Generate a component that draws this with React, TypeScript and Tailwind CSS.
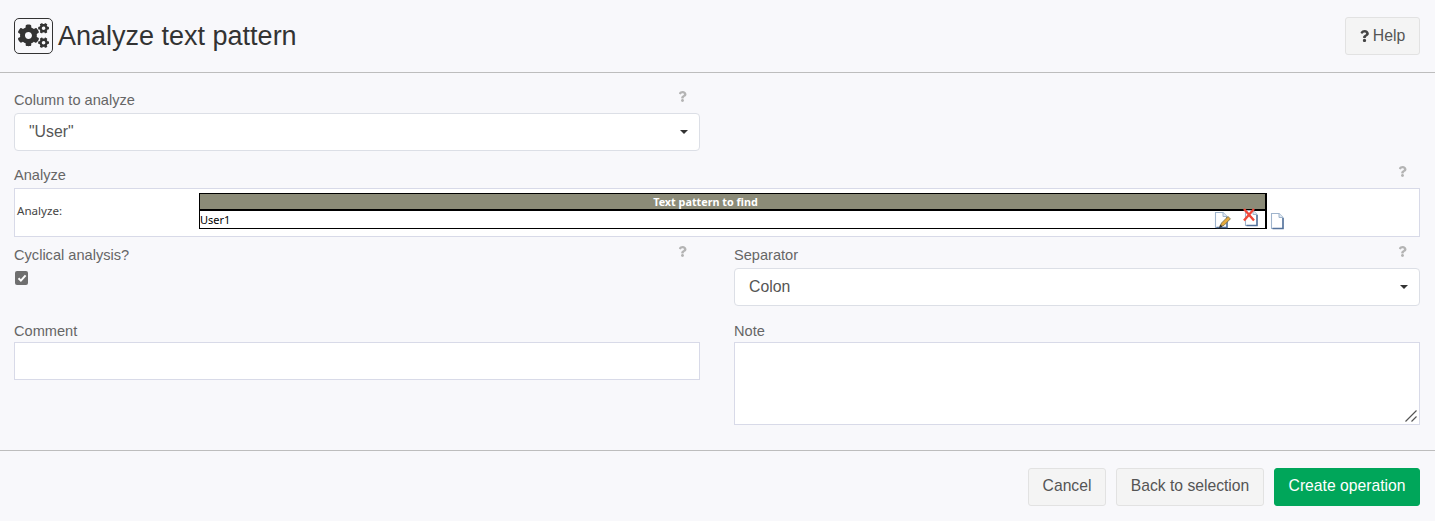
import React from "react";
import { FaCogs, FaQuestion } from "react-icons/fa";

function Q() {
  return <FaQuestion className="w-[9px] h-[11px] text-[#b4b4b4]" />;
}

function Label({ text, qr }: { text: string; qr?: boolean }) {
  return (
    <div className="flex justify-between h-[17px] items-center pr-[13px]">
      <span className="text-[14.6px] leading-[17px] text-[#666] mt-[2px]">{text}</span>
      {qr ? <span className="-mt-[6px]"><Q /></span> : null}
    </div>
  );
}

function Select({ value }: { value: string }) {
  return (
    <div className="h-[38px] bg-white border border-[#dcdfe6] rounded-[4px] flex items-center justify-between pl-[14px] pr-[11px] mt-[5px]">
      <span className="text-[15.8px] text-[#555] pb-[1px]">{value}</span>
      <span className="w-0 h-0 border-l-[4.5px] border-r-[4.5px] border-t-[4.5px] border-l-transparent border-r-transparent border-t-[#333]" />
    </div>
  );
}

function Page({ children }: { children?: React.ReactNode }) {
  return (
    <svg width="18" height="18" viewBox="0 0 18 18" className="overflow-visible block">
      <path d="M2.5 1.5h7.5l4 4v11h-11.5z" fill="#fff" stroke="#9fb4cc" strokeWidth="1.1" />
      <path d="M10 1.5v4h4" fill="#dfe8f2" stroke="#9fb4cc" strokeWidth="1" />
      <path d="M14 6v10.5H3.5" fill="none" stroke="#54729b" strokeWidth="1.5" />
      {children}
    </svg>
  );
}

export default function App() {
  return (
    <div className="w-[1435px] h-[521px] bg-[#f8f8fb] font-['Liberation_Sans',Arial,sans-serif] overflow-hidden">
      <header className="h-[73px] border-b border-[#bdbdbd] flex items-center justify-between pl-[14px] pr-[15px]">
        <div className="flex items-center gap-[5px] -mt-[1px]">
          <div className="w-[39px] h-[36px] border border-[#333] rounded-[5px] flex items-center justify-center">
            <FaCogs className="w-[31px] h-[27px] text-[#333]" />
          </div>
          <h1 className="text-[27px] leading-[36px] text-[#333]">Analyze text pattern</h1>
        </div>
        <button className="w-[75px] h-[38px] bg-[#f4f4f4] border border-[#e2e2e2] rounded-[3px] text-[15.8px] text-[#555] flex items-center justify-center gap-[4px] pb-[1px]">
          <FaQuestion className="w-[9px] h-[12px] text-[#444] mt-[1px]" />
          Help
        </button>
      </header>

      <main className="pl-[14px] pr-[15px] h-[377px] pt-[18px]">
        <div className="w-[686px]">
          <Label text="Column to analyze" qr />
          <Select value={'"User"'} />
        </div>

        <div className="mt-[15px]">
          <Label text="Analyze" qr />
          <div className="mt-[5px] h-[49px] bg-white border border-[#d8dae8] flex pt-[4px] pl-[2px]">
            <div className="w-[182px] pt-[10px] font-['Noto_Sans',sans-serif] text-[11.6px] leading-[16px] text-[#444]">Analyze:</div>
            <div className="w-[1068px] h-[36px] border-y border-l border-r-2 border-black flex flex-col">
              <div className="h-[15px] bg-[#8b8b78] text-white text-[10.8px] font-bold leading-[15px] text-center font-['Noto_Sans',sans-serif] pr-[54px]">Text pattern to find</div>
              <div className="flex-1 border-t-2 border-black flex justify-between bg-white min-h-0">
                <span className="font-['Noto_Sans',sans-serif] text-[11px] leading-[17px] text-black">User1</span>
                <div className="flex gap-[12px] pr-[4px]">
                  <Page>
                    <path d="M7 15.5l1.5-3.5 6.5-6.5 2.4 2.4-6.5 6.5z" fill="#e6a93c" stroke="#6a6a48" strokeWidth="0.8" />
                    <path d="M6 17l1.2-3.4 2.4 2.2z" fill="#333" />
                  </Page>
                  <span className="-mt-[2px] block">
                    <Page>
                      <path d="M1 0l10 11.5M11 0L1 11.5" stroke="#f0483a" strokeWidth="2.4" />
                    </Page>
                  </span>
                </div>
              </div>
            </div>
            <div className="pl-[2px] pt-[19px]"><Page /></div>
          </div>
        </div>

        <div className="grid grid-cols-2 gap-x-[34px] mt-[9px]">
          <div>
            <Label text="Cyclical analysis?" qr />
            <div className="mt-[8px] ml-[1px] w-[13px] h-[14px] rounded-[2px] bg-[#6f6f6f] flex items-center justify-center">
              <svg width="10" height="10" viewBox="0 0 10 10"><path d="M1.5 5.2l2.4 2.4L8.6 2.3" fill="none" stroke="#fff" strokeWidth="2" /></svg>
            </div>
          </div>
          <div>
            <Label text="Separator" qr />
            <Select value="Colon" />
          </div>
        </div>

        <div className="grid grid-cols-2 gap-x-[34px] mt-[16px]">
          <div>
            <Label text="Comment" />
            <div className="mt-[3px] h-[38px] bg-white border border-[#d8dae8]" />
          </div>
          <div>
            <Label text="Note" />
            <div className="mt-[3px] h-[83px] bg-white border border-[#d8dae8] flex items-end justify-end">
              <svg width="14" height="14" viewBox="0 0 14 14" className="mb-[1px] mr-[1px]"><path d="M1.5 12.5L12.5 1.5M7.5 12.5l5-5" stroke="#555" strokeWidth="1.2" /></svg>
            </div>
          </div>
        </div>
      </main>

      <footer className="border-t border-[#bdbdbd] h-[71px] flex justify-end gap-[10px] pt-[17px] pr-[15px] text-[15.7px]">
        <button className="w-[78px] h-[38px] bg-[#f4f4f4] border border-[#e2e2e2] rounded-[3px] text-[#555] pb-[2px]">Cancel</button>
        <button className="w-[148px] h-[38px] bg-[#f4f4f4] border border-[#e2e2e2] rounded-[3px] text-[#555] pb-[2px]">Back to selection</button>
        <button className="w-[146px] h-[38px] bg-[#00a65a] border border-[#00a65a] rounded-[3px] text-white pb-[2px]">Create operation</button>
      </footer>
    </div>
  );
}
